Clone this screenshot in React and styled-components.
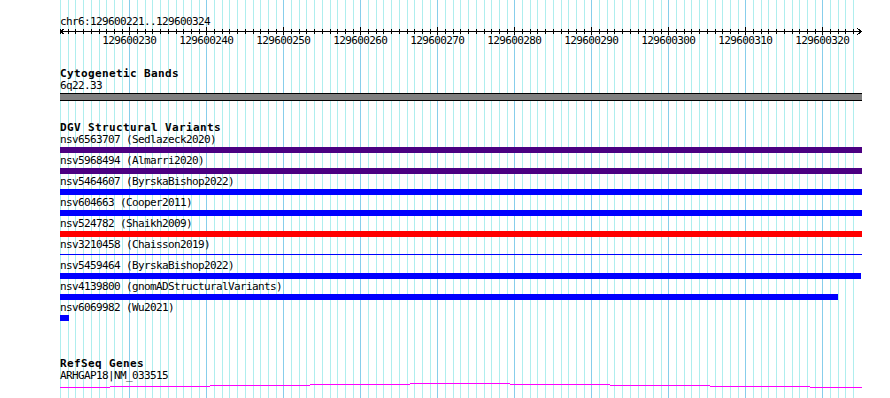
import React from 'react';
import styled, { createGlobalStyle } from 'styled-components';

const START = 129600221;
const END = 129600324;
const PX = 7.7;
const LEFT = 60;

const GlobalStyle = createGlobalStyle`
  html, body { margin: 0; padding: 0; background: #ffffff; }
  body { width: 890px; height: 398px; overflow: hidden; }
`;

const Canvas = styled.div`
  display: grid;
  width: 890px;
  height: 398px;
  overflow: hidden;
  background: #ffffff;
  & > * { grid-area: 1 / 1; }
`;

const GridSvg = styled.svg`
  display: block;
  width: 890px;
  height: 398px;
  shape-rendering: crispEdges;
`;

const Tracks = styled.div`
  display: flex;
  flex-direction: column;
  align-items: flex-start;
  padding: 16px 0 0 ${LEFT}px;
  font-family: "DejaVu Sans Mono", "Liberation Mono", monospace;
  color: #000;
`;

const Plain = styled.div`
  font-size: 11px;
  letter-spacing: -0.62px;
  line-height: ${(p) => p.$lh || 12}px;
  white-space: pre;
`;

const TrackTitle = styled.div`
  font-size: 11px;
  font-weight: bold;
  letter-spacing: 0.38px;
  line-height: 12px;
  white-space: pre;
  margin-top: ${(p) => p.$top}px;
`;

const RulerSvg = styled.svg`
  display: block;
  width: 804px;
  height: 8px;
  shape-rendering: crispEdges;
`;

const TickLabels = styled.div`
  display: flex;
  padding-left: ${(p) => p.$pad}px;
`;

const TickLabel = styled.div`
  width: 77px;
  flex: none;
  text-align: center;
  font-size: 11px;
  letter-spacing: -0.62px;
  line-height: 11px;
`;

const BandBar = styled.div`
  width: 802px;
  height: 8px;
  box-sizing: border-box;
  margin-top: 1px;
  background: #808080;
  border-top: 1px solid #000;
  border-bottom: 1px solid #000;
`;

const FeatureRow = styled.div`
  display: flex;
  flex-direction: column;
`;

const FeatureBar = styled.div`
  height: 6px;
  margin: 1px 0 2px;
  width: ${(p) => p.$width}px;
  background: ${(p) => (p.$thin ? 'transparent' : p.$color)};
  border-top: ${(p) => (p.$thin ? `1px solid ${p.$color}` : 'none')};
  box-sizing: border-box;
  ${(p) => (p.$thin ? 'margin-top: 3px; height: 4px;' : '')}
`;

const GeneSvg = styled.svg`
  display: block;
  width: 802px;
  height: 7px;
  shape-rendering: crispEdges;
`;

function GridLines() {
  const lines = [];
  for (let k = 0; k <= END - START; k++) {
    const x = Math.round(LEFT + k * PX) + 0.5;
    const major = (START + k) % 10 === 0;
    lines.push(
      <line key={k} x1={x} x2={x} y1={0} y2={398} stroke={major ? '#87ceeb' : '#afeeee'} strokeWidth={1} />
    );
  }
  return (
    <GridSvg viewBox="0 0 890 398">
      {lines}
    </GridSvg>
  );
}

function Ruler() {
  const ticks = [];
  for (let k = 0; k <= END - START; k++) {
    const x = Math.round(k * PX) + 0.5;
    const major = (START + k) % 10 === 0;
    ticks.push(
      <line key={k} x1={x} x2={x} y1={major ? 0 : 2} y2={major ? 8 : 7} stroke="#000" strokeWidth={1} />
    );
  }
  return (
    <RulerSvg viewBox="0 0 804 8">
      <line x1={0} x2={802} y1={4.5} y2={4.5} stroke="#000" strokeWidth={1} />
      {ticks}
      <polyline points="4.5,1.5 0.5,4.5 4.5,7.5" fill="none" stroke="#000" strokeWidth={1} />
      <polyline points="797.5,1.5 801.5,4.5 797.5,7.5" fill="none" stroke="#000" strokeWidth={1} />
    </RulerSvg>
  );
}

const labels = [];
for (let b = 129600230; b <= END; b += 10) labels.push(b);

const variants = [
  { name: 'nsv6563707 (Sedlazeck2020)', color: '#4b0082', width: 802 },
  { name: 'nsv5968494 (Almarri2020)', color: '#4b0082', width: 802 },
  { name: 'nsv5464607 (ByrskaBishop2022)', color: '#0000ff', width: 802 },
  { name: 'nsv604663 (Cooper2011)', color: '#0000ff', width: 802 },
  { name: 'nsv524782 (Shaikh2009)', color: '#ff0000', width: 802 },
  { name: 'nsv3210458 (Chaisson2019)', color: '#0000ff', width: 802, thin: true },
  { name: 'nsv5459464 (ByrskaBishop2022)', color: '#0000ff', width: 801 },
  { name: 'nsv4139800 (gnomADStructuralVariants)', color: '#0000ff', width: 778 },
  { name: 'nsv6069982 (Wu2021)', color: '#0000ff', width: 9 },
];

const hat = [
  [0, 50, 5], [50, 150, 4], [150, 250, 3], [250, 350, 2], [350, 450, 1],
  [450, 550, 2], [550, 650, 3], [650, 750, 4], [750, 802, 5],
];

export default function App() {
  const firstCenter = (129600230 - START) * PX;
  return (
    <>
      <GlobalStyle />
      <Canvas>
        <GridLines />
        <Tracks>
          <Plain $lh={11}>chr6:129600221..129600324</Plain>
          <Ruler />
          <TickLabels $pad={firstCenter - 38.5}>
            {labels.map((b) => (
              <TickLabel key={b}>{b}</TickLabel>
            ))}
          </TickLabels>

          <TrackTitle $top={22}>Cytogenetic Bands</TrackTitle>
          <Plain>6q22.33</Plain>
          <BandBar />

          <TrackTitle $top={21}>DGV Structural Variants</TrackTitle>
          {variants.map((v) => (
            <FeatureRow key={v.name}>
              <Plain>{v.name}</Plain>
              <FeatureBar $color={v.color} $width={v.width} $thin={v.thin} />
            </FeatureRow>
          ))}

          <TrackTitle $top={35}>RefSeq Genes</TrackTitle>
          <Plain>ARHGAP18|NM_033515</Plain>
          <GeneSvg viewBox="0 0 802 7">
            {hat.map(([a, b, y]) => (
              <rect key={a} x={a} y={y} width={b - a} height={1} fill="#ff00ff" />
            ))}
          </GeneSvg>
        </Tracks>
      </Canvas>
    </>
  );
}
